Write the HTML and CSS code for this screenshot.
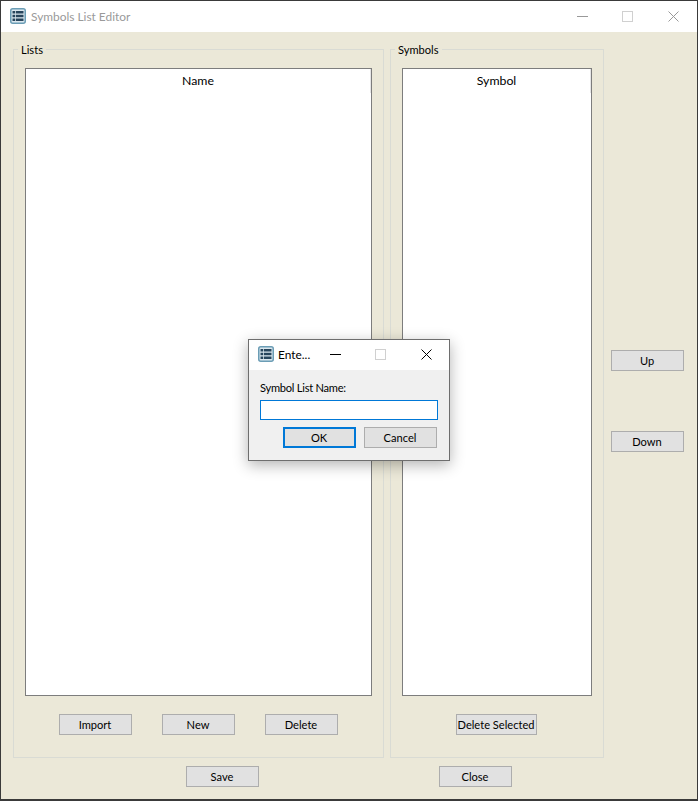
FILE: index.html
```html
<!DOCTYPE html>
<html lang="en">
<head>
<meta charset="utf-8">
<title>Symbols List Editor</title>
<link rel="stylesheet" href="styles.css">
</head>
<body>
<div class="window">
  <header class="titlebar">
    <svg class="app-icon" viewBox="0 0 16 16"><rect x="0.75" y="0.75" width="14.5" height="14.5" rx="2" fill="#dbe7ee" stroke="#6b9db5" stroke-width="1.5"/><path d="M2.5 4.25h2.5M5.75 4.25h7.75M2.5 8h2.5M5.75 8h7.75M2.5 11.75h2.5M5.75 11.75h7.75" stroke="#27455c" stroke-width="2.5"/></svg>
    <span class="title-text">Symbols List Editor</span>
    <div class="controls controls-inactive">
      <span class="control"><svg viewBox="0 0 11 11"><path d="M0 5.5h11"/></svg></span>
      <span class="control control-disabled"><svg viewBox="0 0 11 11"><rect x="0.5" y="0.5" width="10" height="10"/></svg></span>
      <span class="control"><svg viewBox="0 0 11 11"><path d="M0.5 0.5l10 10M10.5 0.5l-10 10"/></svg></span>
    </div>
  </header>
  <main class="content">
    <div class="panels">
      <fieldset class="group group-lists">
        <legend>Lists</legend>
        <div class="table"><div class="table-head">Name</div></div>
        <div class="actions actions-lists">
          <button class="btn">Import</button>
          <button class="btn">New</button>
          <button class="btn">Delete</button>
        </div>
      </fieldset>
      <fieldset class="group group-symbols">
        <legend>Symbols</legend>
        <div class="table"><div class="table-head">Symbol</div></div>
        <div class="actions">
          <button class="btn btn-auto">Delete Selected</button>
        </div>
      </fieldset>
      <div class="side">
        <button class="btn">Up</button>
        <button class="btn">Down</button>
      </div>
    </div>
    <div class="footer">
      <button class="btn">Save</button>
      <button class="btn">Close</button>
    </div>
  </main>
  <section class="dialog">
    <header class="dialog-title">
      <svg class="app-icon" viewBox="0 0 16 16"><rect x="0.75" y="0.75" width="14.5" height="14.5" rx="2" fill="#dbe7ee" stroke="#6b9db5" stroke-width="1.5"/><path d="M2.5 4.25h2.5M5.75 4.25h7.75M2.5 8h2.5M5.75 8h7.75M2.5 11.75h2.5M5.75 11.75h7.75" stroke="#27455c" stroke-width="2.5"/></svg>
      <span class="dialog-name">Ente...</span>
      <div class="controls">
        <span class="control"><svg viewBox="0 0 11 11"><path d="M0 5.5h11"/></svg></span>
        <span class="control control-disabled"><svg viewBox="0 0 11 11"><rect x="0.5" y="0.5" width="10" height="10"/></svg></span>
        <span class="control"><svg viewBox="0 0 11 11"><path d="M0.5 0.5l10 10M10.5 0.5l-10 10"/></svg></span>
      </div>
    </header>
    <div class="dialog-body">
      <label class="dialog-label" for="list-name">Symbol List Name:</label>
      <input class="dialog-input" id="list-name" type="text">
      <div class="dialog-actions">
        <button class="btn btn-default">OK</button>
        <button class="btn">Cancel</button>
      </div>
    </div>
  </section>
</div>
</body>
</html>
```
FILE: styles.css
```css
* { box-sizing: border-box; }
html, body { margin: 0; padding: 0; }
body {
  width: 698px;
  height: 801px;
  overflow: hidden;
  font-family: Lato, "Open Sans", sans-serif;
  font-size: 11.1px;
  color: #000;
}
.window {
  position: relative;
  width: 698px;
  height: 801px;
  background: #ebe8d8;
  border: 1px solid #3a3a3a;
  border-bottom-width: 2px;
  display: flex;
  flex-direction: column;
}
.titlebar {
  height: 31px;
  flex: none;
  background: #fff;
  display: flex;
  align-items: center;
  padding: 0 1px 0 9px;
}
.app-icon { width: 16px; height: 16px; flex: none; margin-bottom: 1px; }
.title-text { margin-left: 5px; font-size: 11.9px; color: #9a9a9a; }
.controls { margin-left: auto; display: flex; }
.control { width: 45px; display: flex; justify-content: center; align-items: center; }
.control:last-child { margin-left: 1px; }
.control svg { width: 11px; height: 11px; fill: none; stroke: #000; stroke-width: 1; }
.controls-inactive .control svg { stroke: #999; }
.control-disabled svg, .controls-inactive .control-disabled svg { stroke: #d0d0d0; }
.content { flex: 1; display: flex; flex-direction: column; padding: 11px 0 0 12px; }
.panels { display: flex; gap: 6px; }
.group {
  margin: 0;
  padding: 13px 11px 0;
  height: 715px;
  border: 1px solid #d9dbd4;
  flex: none;
  display: block;
}
.group legend { margin-left: -7px; padding: 0 3px; height: 12px; line-height: 14px; font-size: 11.1px; }
.group-lists { width: 371px; }
.group-symbols { width: 214px; }
.table { height: 628px; background: #fff; border: 1px solid #7d7d7d; }
.table-head {
  height: 24px;
  line-height: 24px;
  text-align: center;
  font-size: 12.3px;
  border-right: 1px solid #e6e6e6;
}
.actions { display: flex; justify-content: center; gap: 30px; margin-top: 18px; }
.btn {
  width: 73px;
  height: 21px;
  padding: 0 1px 0 0;
  border: 1px solid #adadad;
  border-radius: 0;
  background: #e1e1e1;
  font: inherit;
  color: #000;
}
.btn-auto { width: 81px; white-space: nowrap; margin-right: 1px; }
.btn-default { border: 2px solid #0078d7; }
.side { display: flex; flex-direction: column; justify-content: center; gap: 60px; margin-left: 1px; padding-top: 1px; }
.footer { display: flex; justify-content: center; gap: 180px; margin-top: 8px; margin-left: -12px; }
.dialog {
  position: absolute;
  left: 247px;
  top: 338px;
  width: 202px;
  height: 122px;
  background: #f0f0f0;
  border: 1px solid #6e6e6e;
  box-shadow: 0 4px 14px rgba(0, 0, 0, 0.3);
  display: flex;
  flex-direction: column;
}
.dialog-title {
  height: 30px;
  flex: none;
  background: #fff;
  display: flex;
  align-items: center;
  padding: 0 0 1px 9px;
}
.dialog-name { margin-left: 4px; font-size: 11.9px; }
.dialog-body { flex: 1; display: flex; flex-direction: column; padding: 10px 11px 0; }
.dialog-label { line-height: 16px; letter-spacing: -0.25px; }
.dialog-input {
  width: 178px;
  height: 20px;
  margin-top: 4px;
  border: 1px solid #0078d7;
  background: #fff;
  padding: 0;
  outline: none;
}
.dialog-actions { display: flex; gap: 8px; margin-top: 7px; padding-left: 23px; }
```
